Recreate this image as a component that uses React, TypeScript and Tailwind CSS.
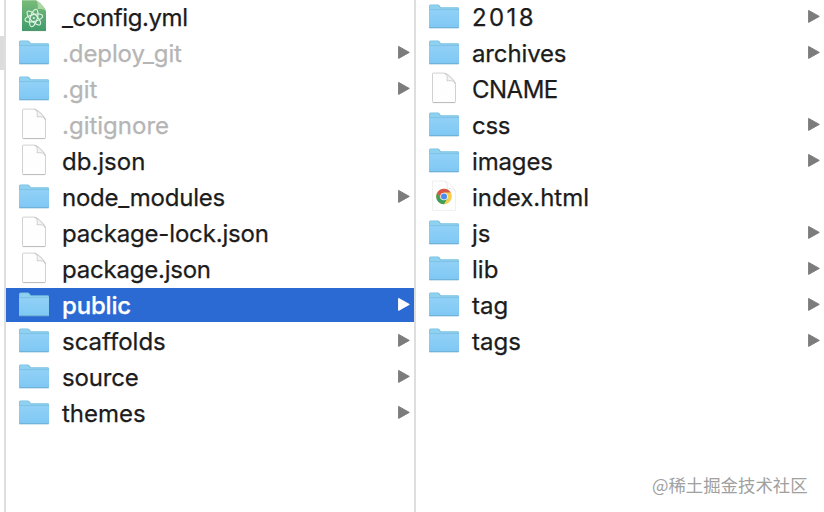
type Kind = 'folder' | 'file' | 'atom' | 'chrome';

interface Entry {
  name: string;
  kind: Kind;
  hidden?: boolean;
  selected?: boolean;
  tracking?: string;
}

const project: Entry[] = [
  { name: '_config.yml', kind: 'atom', tracking: 'tracking-[-0.38px]' },
  { name: '.deploy_git', kind: 'folder', hidden: true, tracking: 'tracking-[-0.1px]' },
  { name: '.git', kind: 'folder', hidden: true },
  { name: '.gitignore', kind: 'file', hidden: true },
  { name: 'db.json', kind: 'file' },
  { name: 'node_modules', kind: 'folder', tracking: 'tracking-[-0.24px]' },
  { name: 'package-lock.json', kind: 'file', tracking: 'tracking-[-0.16px]' },
  { name: 'package.json', kind: 'file', tracking: 'tracking-[-0.22px]' },
  { name: 'public', kind: 'folder', selected: true, tracking: 'tracking-[-0.18px]' },
  { name: 'scaffolds', kind: 'folder' },
  { name: 'source', kind: 'folder', tracking: 'tracking-[-0.18px]' },
  { name: 'themes', kind: 'folder' },
];

const output: Entry[] = [
  { name: '2018', kind: 'folder', tracking: 'tracking-[2.4px]' },
  { name: 'archives', kind: 'folder', tracking: 'tracking-[-0.14px]' },
  { name: 'CNAME', kind: 'file', tracking: 'tracking-[-0.5px]' },
  { name: 'css', kind: 'folder', tracking: 'tracking-[-0.3px]' },
  { name: 'images', kind: 'folder', tracking: 'tracking-[-0.16px]' },
  { name: 'index.html', kind: 'chrome' },
  { name: 'js', kind: 'folder' },
  { name: 'lib', kind: 'folder' },
  { name: 'tag', kind: 'folder' },
  { name: 'tags', kind: 'folder' },
];

function FolderIcon() {
  return (
    <svg className="h-9 w-[30px] shrink-0" viewBox="0 -0.3 30 36">
      <defs>
        <linearGradient id="folder" x1="0" y1="0" x2="0" y2="1">
          <stop offset="0" stopColor="#91d1f6" />
          <stop offset="1" stopColor="#7ec8f4" />
        </linearGradient>
      </defs>
      <path d="M0 28V6.6Q0 5.1 1.7 5.1H8.6Q9.6 5.1 10.2 5.8L11.4 7.4Q12 8 13 8H28.6Q30 8 30 9.2V28Z" fill="#78bfe2" />
      <path d="M.6 10V6.9Q.6 6 1.8 6H8.5Q9.2 6 9.7 6.6L10.9 8.1Q11.6 8.9 12.7 8.9H28.4Q29.4 8.9 29.4 9.5V10Z" fill="#8ed2f0" />
      <path d="M.1 10.2H29.9V28.1Q29.9 28.8 29.2 28.8H.8Q.1 28.8 .1 28.1Z" fill="url(#folder)" />
      <path d="M.4 10.3H29.6" stroke="#79bce0" strokeWidth=".6" />
      <path d="M.3 28.5H29.7" stroke="#6aaacd" strokeWidth="1" />
    </svg>
  );
}

function FileIcon() {
  return (
    <svg className="h-9 w-[30px] shrink-0" viewBox="0 -0.5 30 36">
      <path d="M3.5 2.3Q3.5 1.6 4.2 1.6H14.6C18 1.8 20 3.8 22 6C24.6 8.6 26.5 10.4 26.5 13.2V30.2Q26.5 31 25.8 31H4.2Q3.5 31 3.5 30.2Z" fill="#fefefe" stroke="#cccccc" strokeWidth=".9" strokeLinejoin="round" />
      <path d="M4 31.1H26" stroke="#b8b8b8" strokeWidth=".9" />
      <path d="M15.6 1.8C18.4 3 18.6 5.6 18 9.4C22.3 8.7 25.6 9.6 26.4 12.4C25.6 9.5 20 3.4 15.6 1.8Z" fill="#f3f3f3" stroke="#c6c6c6" strokeWidth=".8" strokeLinejoin="round" />
    </svg>
  );
}

function AtomIcon() {
  return (
    <svg className="h-9 w-[30px] shrink-0" viewBox="0 -0.3 30 36">
      <defs>
        <linearGradient id="atom" x1="0" y1="0" x2="0" y2="1">
          <stop offset="0" stopColor="#78bb79" />
          <stop offset="1" stopColor="#419c6a" />
        </linearGradient>
      </defs>
      <path d="M3 1H17C20 2.2 26 8.6 27 12V31.5H3Z" fill="url(#atom)" />
      <path d="M17 1C19 3 19 6.5 18.5 9.8C22 9.3 26 9.6 27 12C26 8.6 20 2.2 17 1Z" fill="#a9d6a2" />
      <path d="M3 31.3H27" stroke="#3b855a" strokeWidth=".7" />
      <g fill="none" stroke="#e3f4e8" strokeWidth="1.1">
        <ellipse cx="14.8" cy="18.7" rx="9.1" ry="3.5" transform="rotate(-14 14.8 18.7)" />
        <ellipse cx="14.8" cy="18.7" rx="9.1" ry="3.5" transform="rotate(46 14.8 18.7)" />
        <ellipse cx="14.8" cy="18.7" rx="9.1" ry="3.5" transform="rotate(106 14.8 18.7)" />
      </g>
      <circle cx="14.8" cy="18.7" r="1.1" fill="#e3f4e8" />
    </svg>
  );
}

function ChromeIcon() {
  return (
    <svg className="h-9 w-[30px] shrink-0" viewBox="0 -0.4 30 36">
      <path d="M3.5 1.6H14.6C18 1.8 20 3.8 22 6C24.6 8.6 26.5 10.4 26.5 13.2V31H3.5Z" fill="#fefefe" stroke="#ececec" strokeWidth=".8" />
      <path d="M15.6 1.8C18.4 3 18.6 5.6 18 9.4C22.3 8.7 25.6 9.6 26.4 12.4" fill="none" stroke="#e2e2e2" strokeWidth=".7" />
      <circle cx="15" cy="17.1" r="7.8" fill="#f7cd4c" />
      <path d="M8.25 13.2A7.8 7.8 0 0 0 15 24.9L18.4 19.1L11.6 19.1Z" fill="#3f9e5b" />
      <path d="M8.25 13.2A7.8 7.8 0 0 1 21.75 13.2H15L11.6 19.1Z" fill="#d65448" />
      <circle cx="15" cy="17.1" r="3.8" fill="#f5f5f5" />
      <circle cx="15" cy="17.1" r="3" fill="#4b8bea" />
    </svg>
  );
}

const icons = { folder: FolderIcon, file: FileIcon, atom: AtomIcon, chrome: ChromeIcon };

function Row({ entry }: { entry: Entry }) {
  const Icon = icons[entry.kind];
  const color = entry.selected ? 'text-white' : entry.hidden ? 'text-[#b5b5b5]' : 'text-[#1c1c1c]';
  return (
    <li className={`flex h-9 items-center bg-clip-content py-px pl-0 ${entry.selected ? 'bg-[#2b69d3]' : ''}`}>
      <div className="w-[13px] shrink-0" />
      <Icon />
      <span className={`ml-[13px] pt-0.5 text-[24px] leading-9 whitespace-nowrap [-webkit-text-stroke:0.25px_currentColor] ${color} ${entry.selected ? 'font-medium' : ''} ${entry.tracking ?? 'tracking-normal'}`}>{entry.name}</span>
      {entry.kind === 'folder' && (
        <svg className={`mr-1 ml-auto h-4 w-3 shrink-0 ${entry.selected ? 'text-white' : 'text-[#7c7c7c]'}`} viewBox="0 0 12 16">
          <path d="M.6 1.4L11.3 7.4L.6 13.4Z" fill="currentColor" stroke="currentColor" strokeWidth="1" strokeLinejoin="round" />
        </svg>
      )}
    </li>
  );
}

export default function App() {
  return (
    <div className="relative flex h-[512px] w-[824px] overflow-hidden bg-white font-['Inter','Liberation_Sans',sans-serif]">
      <div className="w-1 shrink-0 pt-9">
        <div className="h-[34px] bg-[#dcdcdc]" />
      </div>
      <ul className="-mt-px h-[513px] w-[410px] shrink-0 border-l-2 border-[#dedede]">
        {project.map((e) => <Row key={e.name} entry={e} />)}
      </ul>
      <ul className="-mt-px h-[513px] w-[410px] shrink-0 border-l-2 border-[#dedede]">
        {output.map((e) => <Row key={e.name} entry={e} />)}
      </ul>
      <div className="absolute top-[471px] left-[652px] font-['Noto_Sans_CJK_SC',sans-serif] text-[17.4px] leading-7 whitespace-nowrap text-[#a0a0a0]">@稀土掘金技术社区</div>
    </div>
  );
}
